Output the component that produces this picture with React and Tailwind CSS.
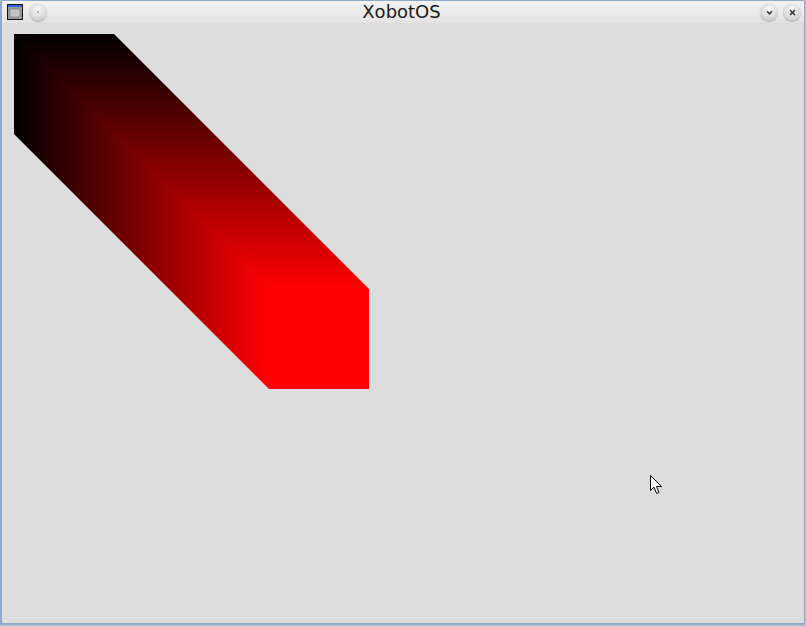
import React from 'react'

function RoundButton({ children }) {
  return (
    <div className="w-[18px] h-[18px] rounded-full bg-[radial-gradient(circle_at_50%_35%,#fafafa_0%,#d8d8d8_60%,#b4b4b4_100%)] shadow-[0_1px_1px_rgba(0,0,0,0.25)] flex items-center justify-center">
      {children}
    </div>
  )
}

function AppIcon() {
  return (
    <svg width="16" height="16" viewBox="0 0 16 16">
      <rect x="0.5" y="0.5" width="15" height="15" fill="#9a9a9a" stroke="#111" />
      <rect x="1" y="1" width="14" height="2" fill="#2f63d8" />
      <path d="M3 5 H12 L13 7 V13 H3 Z" fill="#c4c4c4" stroke="#777" strokeWidth="0.6" />
    </svg>
  )
}

function Cursor() {
  return (
    <svg width="13" height="20" viewBox="0 0 13 20">
      <path d="M0.5 0.5 V15.5 L4 12.2 L6.6 18.5 L9 17.5 L6.5 11.5 H11.5 Z" fill="#fff" stroke="#000" strokeWidth="1" strokeLinejoin="round" />
    </svg>
  )
}

export default function App() {
  return (
    <div className="w-[806px] h-[627px] bg-[#c8c8c8] font-['DejaVu_Sans',sans-serif]">
      <div className="w-[805px] h-[625px] flex flex-col border border-[#8ea8d4] border-l-2 border-b-2 rounded-t-[3px] bg-[#dddddd] overflow-hidden">
        {/* title bar */}
        <div className="h-[22px] flex items-center px-[4px] bg-[linear-gradient(to_bottom,#f4f3f3,#e4e2e2)] text-[#1a1a1a]">
          <div className="flex items-center gap-[6px] ml-[1px]">
            <AppIcon />
            <RoundButton>
              <div className="w-[2px] h-[2px] rounded-full bg-[#999]" />
            </RoundButton>
          </div>
          <div className="flex-1 text-center text-[18px] leading-[22px] -mt-[1px] pr-[4px]">XobotOS</div>
          <div className="flex items-center gap-[5px] -mr-[1px]">
            <RoundButton>
              <svg width="9" height="9" viewBox="0 0 9 9">
                <path d="M2 3.2 L4.5 5.8 L7 3.2" fill="none" stroke="#333" strokeWidth="1.5" />
              </svg>
            </RoundButton>
            <RoundButton>
              <svg width="9" height="9" viewBox="0 0 9 9">
                <path d="M2 2 L7 7 M7 2 L2 7" fill="none" stroke="#333" strokeWidth="1.6" />
              </svg>
            </RoundButton>
          </div>
        </div>
        {/* canvas */}
        <div className="flex-1 relative">
          <div className="ml-[12px] mt-[11px] w-[355px] h-[355px] bg-[linear-gradient(to_right,#000_0%,#f00_71.8%),linear-gradient(to_bottom,#000_0%,#f00_71.8%)] bg-blend-darken [clip-path:polygon(0_0,100px_0,355px_255px,355px_355px,255px_355px,0_100px)]" />
          <div className="absolute left-[648px] top-[452px]">
            <Cursor />
          </div>
        </div>
      </div>
    </div>
  )
}
